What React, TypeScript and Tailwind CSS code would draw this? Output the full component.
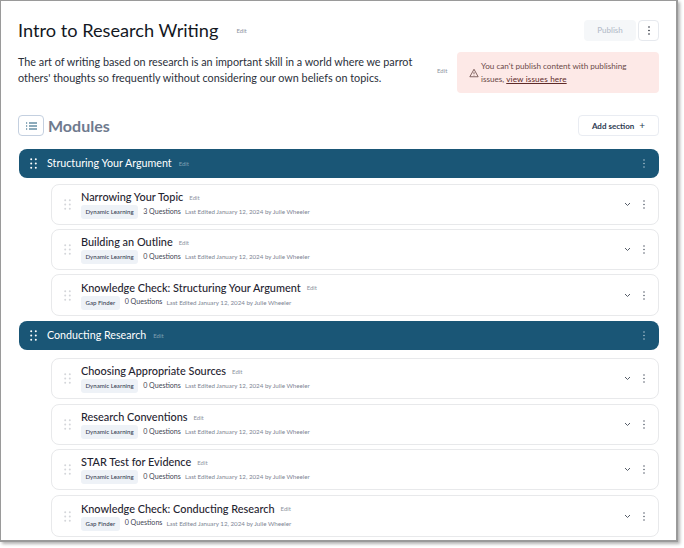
import React from "react";

const font = { fontFamily: "Lato, 'Liberation Sans', sans-serif" };

function Dots({ className }: { className: string }) {
  return (
    <svg width="7" height="11" viewBox="0 0 7 11" className={className} fill="currentColor">
      {[1.2, 5.5, 9.8].map((y) => (
        <React.Fragment key={y}>
          <circle cx="1.2" cy={y} r="1" />
          <circle cx="5.8" cy={y} r="1" />
        </React.Fragment>
      ))}
    </svg>
  );
}

function Kebab({ className }: { className: string }) {
  return (
    <svg width="4" height="9" viewBox="0 0 4 9" className={className} fill="currentColor">
      <circle cx="2" cy="1" r="0.8" />
      <circle cx="2" cy="4.5" r="0.8" />
      <circle cx="2" cy="8" r="0.8" />
    </svg>
  );
}

function Chevron() {
  return (
    <svg width="7" height="5" viewBox="0 0 7 5" fill="none" stroke="#555c68" strokeWidth="1" className="mr-[11px]">
      <path d="M1 1 3.5 3.5 6 1" />
    </svg>
  );
}

function Section({ title, mt }: { title: string; mt: string }) {
  return (
    <div className={`ml-[1px] flex h-[29px] items-center rounded-[8px] bg-[#1a5676] pl-[11px] pr-[13px] text-white ${mt}`}>
      <Dots className="text-white" />
      <span className="ml-[10px] text-[10.7px]">{title}</span>
      <span className="ml-[7px] text-[6px] text-[#7fa0b3]">Edit</span>
      <Kebab className="ml-auto text-[#a9bfcc]" />
    </div>
  );
}

function Card({ title, tag, q, h, mt }: { title: string; tag: string; q: string; h: string; mt: string }) {
  return (
    <div className={`ml-[33px] flex items-center rounded-[8px] border border-[#e8e9eb] bg-white pl-[12px] pr-[12px] ${h} ${mt}`}>
      <Dots className="shrink-0 text-[#d4d6da]" />
      <div className="ml-[10px] flex flex-col">
        <div className="flex items-center">
          <span className="text-[10.9px] font-medium leading-[14px] text-[#1f2430]">{title}</span>
          <span className="ml-[6px] text-[6px] text-[#8d93a0]">Edit</span>
        </div>
        <div className="mt-[1px] flex items-center">
          <span className="flex h-[14px] items-center rounded-[3px] bg-[#eef2f7] px-[4.5px] text-[6.1px] font-medium text-[#3a4354]">{tag}</span>
          <span className="ml-[5px] text-[7.1px] text-[#3f4654]">{q}</span>
          <span className="ml-[4px] text-[6.2px] text-[#7d8493]">Last Edited January 12, 2024 by Julie Wheeler</span>
        </div>
      </div>
      <div className="ml-auto flex items-center">
        <Chevron />
        <Kebab className="text-[#5b6370]" />
      </div>
    </div>
  );
}

export default function App() {
  return (
    <div className="h-[548px] w-[684px] bg-white" style={font}>
      <div className="h-[542px] w-[678px] border border-r-2 border-b-2 border-[#9a9a9a] bg-white pl-[17px] pr-[17px] pt-[18px] shadow-[2px_2px_3px_rgba(0,0,0,0.3)]">
        <div className="flex h-[22px] items-center">
          <h1 className="text-[18.2px] font-normal leading-[22px] text-[#14181f]">Intro to Research Writing</h1>
          <span className="ml-[18px] text-[6px] text-[#8d93a0]">Edit</span>
          <span className="ml-auto flex h-[21px] w-[52px] items-center justify-center rounded-[4px] bg-[#f5f7f9] text-[8px] font-medium text-[#b4bcc9]">Publish</span>
          <span className="ml-[2px] flex h-[21px] w-[21px] items-center justify-center rounded-[4px] border border-[#e6e9ee]">
            <Kebab className="text-[#1f2430]" />
          </span>
        </div>
        <div className="mt-[11px] flex">
          <p className="mt-[2px] w-[400px] text-[10.8px] leading-[16px] text-[#2a2f3a]">
            The art of writing based on research is an important skill in a world where we parrot others' thoughts so frequently without considering our own beliefs on topics.
          </p>
          <span className="ml-[19px] mt-[14px] text-[6px] text-[#8d93a0]">Edit</span>
          <div className="ml-auto flex h-[41px] w-[202px] items-center rounded-[4px] bg-[#fde9e7] pl-[12px] pr-[8px]">
            <svg width="10" height="10" viewBox="0 0 24 24" fill="none" stroke="#6b4a48" strokeWidth="2" className="mr-[2px] shrink-0">
              <path d="M12 3 22 21H2Z" />
              <path d="M12 10v5M12 17.5v1" />
            </svg>
            <div className="text-[8.15px] leading-[12.5px] text-[#6b4a48]">
              <div>You can't publish content with publishing</div>
              <div>
                issues, <a className="tracking-[0.15px] text-[#5e2a28] underline">view issues here</a>
              </div>
            </div>
          </div>
        </div>
        <div className="mt-[22px] flex h-[21px] items-center">
          <span className="flex h-[21px] w-[26px] items-center justify-center rounded-[4px] border border-[#c4d0e0] text-[#1a5676]">
            <svg width="11" height="8" viewBox="0 0 11 8" fill="none" stroke="currentColor" strokeWidth="1">
              <path d="M3 1h8M3 4h8M3 7h8M0 1h1.2M0 4h1.2M0 7h1.2" />
            </svg>
          </span>
          <span className="ml-[4px] text-[16px] font-bold text-[#6f7a8e]">Modules</span>
          <span className="ml-auto flex h-[21px] w-[81px] items-center justify-center rounded-[4px] border border-[#e9ecf2] text-[8px] font-bold text-[#2d3b52]">
            Add section <span className="ml-[5px] text-[10px] font-normal">+</span>
          </span>
        </div>
        <Section title="Structuring Your Argument" mt="mt-[13px]" />
        <Card title="Narrowing Your Topic" tag="Dynamic Learning" q="3 Questions" h="h-[41px]" mt="mt-[6px]" />
        <Card title="Building an Outline" tag="Dynamic Learning" q="0 Questions" h="h-[41px]" mt="mt-[4px]" />
        <Card title="Knowledge Check: Structuring Your Argument" tag="Gap Finder" q="0 Questions" h="h-[42px]" mt="mt-[4px]" />
        <Section title="Conducting Research" mt="mt-[5px]" />
        <Card title="Choosing Appropriate Sources" tag="Dynamic Learning" q="0 Questions" h="h-[41px]" mt="mt-[8px]" />
        <Card title="Research Conventions" tag="Dynamic Learning" q="0 Questions" h="h-[41px]" mt="mt-[5px]" />
        <Card title="STAR Test for Evidence" tag="Dynamic Learning" q="0 Questions" h="h-[41px]" mt="mt-[4px]" />
        <Card title="Knowledge Check: Conducting Research" tag="Gap Finder" q="0 Questions" h="h-[42px]" mt="mt-[5px]" />
      </div>
    </div>
  );
}
